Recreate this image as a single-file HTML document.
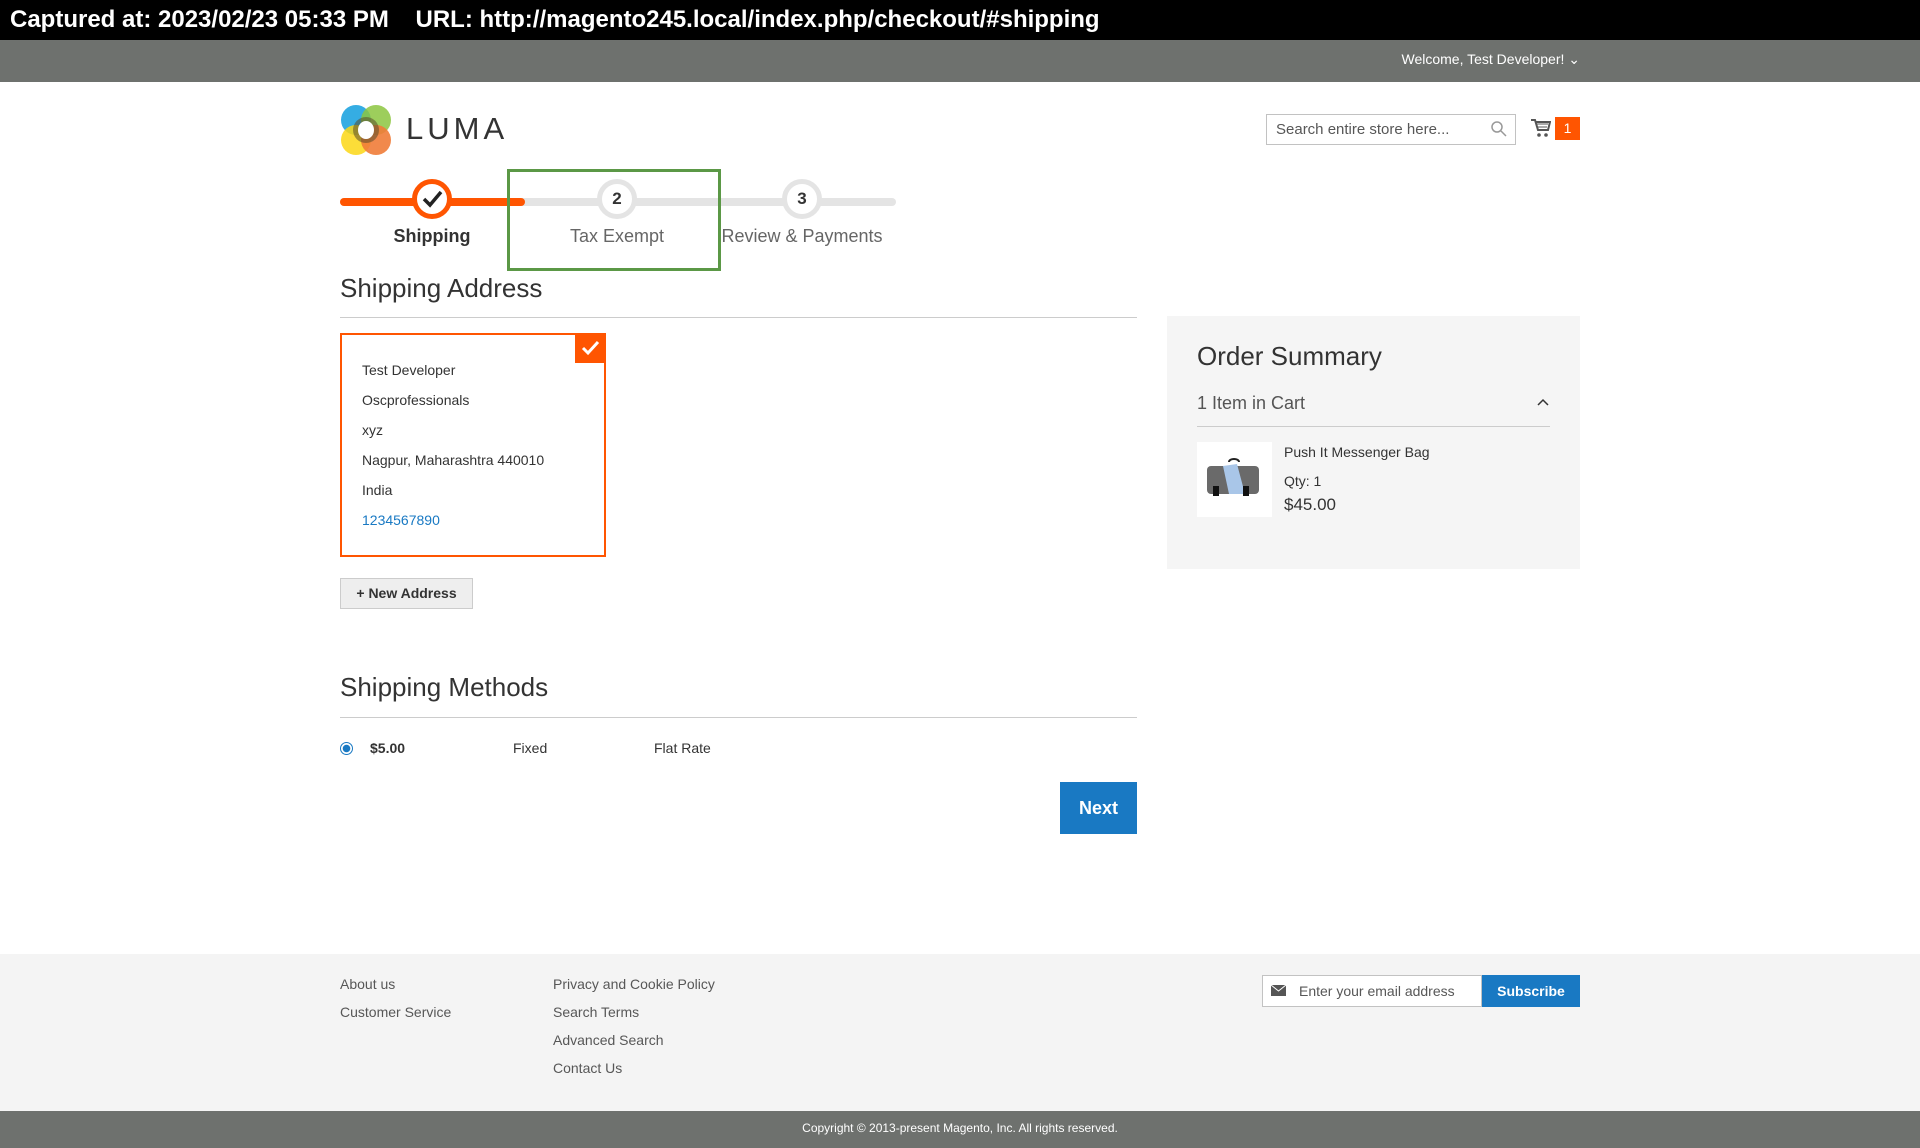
<!DOCTYPE html>
<html><head><meta charset="utf-8"><style>
*{box-sizing:border-box;margin:0;padding:0}
body{width:1920px;height:1148px;position:relative;font-family:"Liberation Sans",sans-serif;color:#333;background:#fff;overflow:hidden}
.a{position:absolute;white-space:nowrap}
.cap{left:0;top:0;width:1920px;height:40px;background:#000;color:#fff;font-weight:bold;font-size:24px;line-height:40px;padding-left:10px}
.hdr{left:0;top:40px;width:1920px;height:42px;background:#6e716e}
.t14{font-size:14px}
.bar{height:8px;border-radius:4px;top:198px}
.circ{width:40px;height:40px;border-radius:50%;top:179px;background:#fff;border:5px solid #e4e4e4;text-align:center;font-weight:bold;font-size:17px;line-height:30px;color:#333}
.lab{top:226px;font-size:18px;color:#666;text-align:center;width:200px}
.h2{font-size:26px;font-weight:300;color:#333}
.line{height:1px;background:#ccc}
</style></head><body>
<div class="a cap">Captured at: 2023/02/23 05:33 PM&nbsp;&nbsp;&nbsp;&nbsp;URL: http://magento245.local/index.php/checkout/#shipping</div>
<div class="a hdr"></div>
<div class="a" style="right:340px;top:51px;color:#fff;font-size:14px">Welcome, Test Developer! ⌄</div>

<svg class="a" style="left:340px;top:104px" width="52" height="52" viewBox="0 0 52 52">
<circle cx="16" cy="16" r="15" fill="#1fa4e0" opacity=".9"/><circle cx="36" cy="16" r="15" fill="#8cc63f" opacity=".85"/>
<circle cx="16" cy="36" r="15" fill="#fbd715" opacity=".85"/><circle cx="36" cy="36" r="15" fill="#f07c39" opacity=".9"/>
<circle cx="26" cy="26" r="13" fill="#5a4a2a" opacity=".55"/><ellipse cx="26" cy="26" rx="8" ry="9" fill="#fff"/></svg>
<div class="a" style="left:406px;top:111px;font-size:31px;letter-spacing:4px;color:#333">LUMA</div>

<div class="a" style="left:1266px;top:114px;width:250px;height:31px;border:1px solid #c2c2c2;font-size:15px;color:#575757;padding:6px 9px">Search entire store here...</div>
<svg class="a" style="left:1491px;top:121px" width="16" height="16" viewBox="0 0 16 16"><circle cx="6" cy="6" r="5" fill="none" stroke="#999" stroke-width="1.5"/><path d="M10 10l5 5" stroke="#999" stroke-width="1.5"/></svg>
<svg class="a" style="left:1531px;top:118px" width="20" height="20" viewBox="0 0 20 20"><path d="M0 2h4l3 10h10l2-8H5" fill="none" stroke="#555" stroke-width="2"/><path d="M6 6h11M7 9h9" stroke="#555"/><circle cx="8" cy="17" r="1.8" fill="#555"/><circle cx="15" cy="17" r="1.8" fill="#555"/></svg>
<div class="a" style="left:1555px;top:117px;width:25px;height:23px;background:#ff5501;color:#fff;font-size:14px;text-align:center;line-height:23px">1</div>

<div class="a bar" style="left:340px;width:556px;background:#e4e4e4"></div>
<div class="a bar" style="left:340px;width:185px;background:#ff5501"></div>
<div class="a circ" style="left:412px;border-color:#ff5501"><svg width="24" height="30" viewBox="0 0 24 30"><path d="M4 15l6 6 11-13" fill="none" stroke="#222" stroke-width="3.5"/></svg></div>
<div class="a circ" style="left:597px">2</div>
<div class="a circ" style="left:782px">3</div>
<div class="a lab" style="left:332px;color:#333;font-weight:bold">Shipping</div>
<div class="a lab" style="left:517px">Tax Exempt</div>
<div class="a lab" style="left:702px">Review &amp; Payments</div>
<div class="a" style="left:507px;top:169px;width:214px;height:102px;border:3px solid #5b9846"></div>

<div class="a h2" style="left:340px;top:273px">Shipping Address</div>
<div class="a line" style="left:340px;top:317px;width:797px"></div>
<div class="a" style="left:340px;top:333px;width:266px;height:224px;border:2px solid #ff5501"></div>
<div class="a" style="left:575px;top:333px;width:31px;height:30px;background:#ff5501"><svg width="31" height="30" viewBox="0 0 31 30"><path d="M8 15l5 5 10-11" fill="none" stroke="#fff" stroke-width="3"/></svg></div>
<div class="a t14" style="left:362px;top:355px;line-height:30px">Test Developer<br>Oscprofessionals<br>xyz<br>Nagpur, Maharashtra 440010<br>India<br><span style="color:#1979c3">1234567890</span></div>
<div class="a" style="left:340px;top:578px;width:133px;height:31px;background:#eee;border:1px solid #ccc;font-size:14px;font-weight:bold;text-align:center;line-height:29px">+ New Address</div>

<div class="a h2" style="left:340px;top:672px">Shipping Methods</div>
<div class="a line" style="left:340px;top:717px;width:797px"></div>
<div class="a" style="left:340px;top:742px;width:13px;height:13px;border-radius:50%;border:1px solid #1979c3;background:radial-gradient(#1979c3 3.5px,#fff 4px)"></div>
<div class="a t14" style="left:370px;top:740px;font-weight:bold">$5.00</div>
<div class="a t14" style="left:513px;top:740px">Fixed</div>
<div class="a t14" style="left:654px;top:740px">Flat Rate</div>
<div class="a" style="left:1060px;top:782px;width:77px;height:52px;background:#1979c3;color:#fff;font-size:18px;font-weight:bold;text-align:center;line-height:52px">Next</div>

<div class="a" style="left:1167px;top:316px;width:413px;height:253px;background:#f5f5f5"></div>
<div class="a h2" style="left:1197px;top:341px">Order Summary</div>
<div class="a" style="left:1197px;top:393px;font-size:18px;font-weight:300;color:#555">1 Item in Cart</div>
<svg class="a" style="left:1537px;top:398px" width="12" height="8" viewBox="0 0 12 8"><path d="M1 7l5-5 5 5" fill="none" stroke="#333" stroke-width="1.5"/></svg>
<div class="a" style="left:1197px;top:426px;width:353px;height:1px;background:#ccc"></div>
<div class="a" style="left:1197px;top:442px;width:75px;height:75px;background:#fff"></div>
<svg class="a" style="left:1205px;top:458px" width="58" height="42" viewBox="0 0 58 42"><path d="M24 4c0-4 10-4 10 0" fill="none" stroke="#222" stroke-width="2"/><rect x="2" y="8" width="52" height="28" rx="4" fill="#6a6a6a"/><path d="M18 8l14-2 8 30H24z" fill="#a9c6e8"/><rect x="8" y="28" width="6" height="10" fill="#111"/><rect x="38" y="28" width="6" height="10" fill="#111"/></svg>
<div class="a t14" style="left:1284px;top:444px">Push It Messenger Bag</div>
<div class="a t14" style="left:1284px;top:473px">Qty: 1</div>
<div class="a" style="left:1284px;top:495px;font-size:17px">$45.00</div>

<div class="a" style="left:0;top:954px;width:1920px;height:157px;background:#f4f4f4"></div>
<div class="a t14" style="left:340px;top:970px;line-height:28px;color:#575757">About us<br>Customer Service</div>
<div class="a t14" style="left:553px;top:970px;line-height:28px;color:#575757">Privacy and Cookie Policy<br>Search Terms<br>Advanced Search<br>Contact Us</div>
<div class="a" style="left:1262px;top:975px;width:220px;height:32px;background:#fff;border:1px solid #c2c2c2;font-size:14px;color:#575757;padding:7px 0 0 36px">Enter your email address</div>
<svg class="a" style="left:1271px;top:985px" width="15" height="11" viewBox="0 0 15 11"><rect width="15" height="11" fill="#555"/><path d="M0 0l7.5 6L15 0" fill="none" stroke="#fff" stroke-width="1"/></svg>
<div class="a" style="left:1482px;top:975px;width:98px;height:32px;background:#1979c3;color:#fff;font-size:14px;font-weight:bold;text-align:center;line-height:32px">Subscribe</div>
<div class="a" style="left:0;top:1111px;width:1920px;height:37px;background:#6e716e;color:#fff;font-size:12px;text-align:center;line-height:34px">Copyright © 2013-present Magento, Inc. All rights reserved.</div>
</body></html>
